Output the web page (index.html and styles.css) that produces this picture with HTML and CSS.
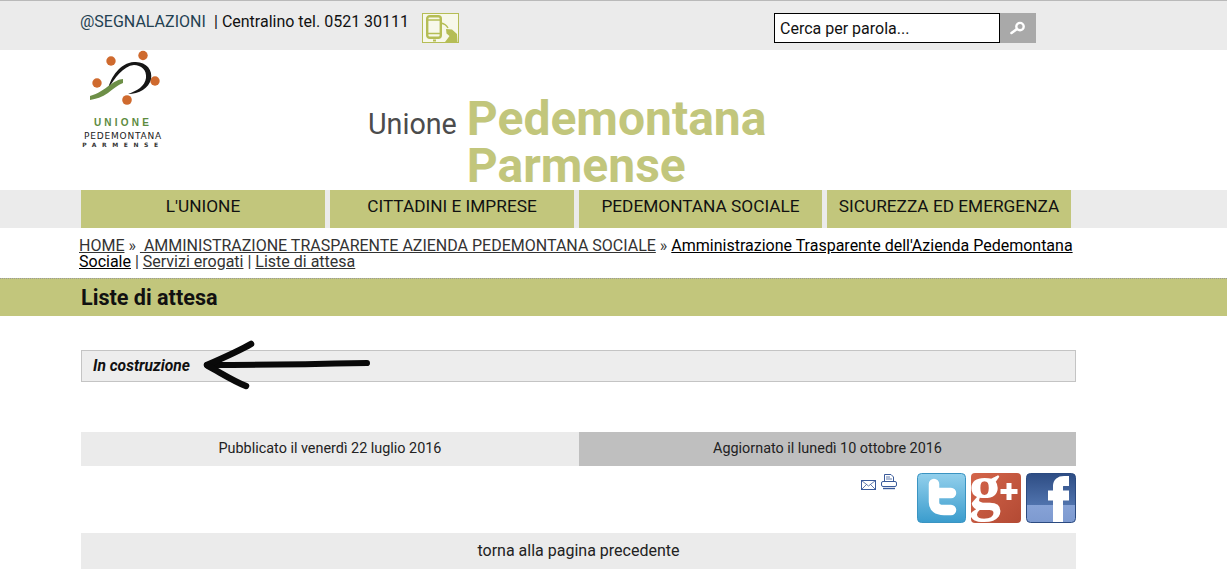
FILE: index.html
```html
<!DOCTYPE html>
<html lang="it">
<head>
<meta charset="utf-8">
<title>Liste di attesa</title>
<link rel="stylesheet" href="styles.css">
</head>
<body>
<div class="topbar">
  <div class="contacts">
    <a class="seg">@SEGNALAZIONI</a>
    <span class="tel">| Centralino tel. 0521 30111</span>
    <span class="phone">
      <svg width="37" height="30" viewBox="0 0 37 30">
        <rect x="0.5" y="0.5" width="36" height="29" fill="#f7f8ea" stroke="#b5bd55"/>
        <rect x="5.2" y="3.2" width="13.6" height="21.6" rx="2.5" fill="none" stroke="#b5bd55" stroke-width="2.4"/>
        <path d="M6 7h12M6 20.500h12" stroke="#b5bd55" stroke-width="1.4"/>
        <path d="M11 26.500v2h3v-2" fill="#b5bd55"/>
        <path d="M19 10 Q24 11 26 15" fill="none" stroke="#b5bd55" stroke-width="1.4"/>
        <path d="M24 16 L30 16.500 L35 21 L35.500 29 L23 29 L27.500 23 L24.500 20.500 Z" fill="#b5bd55"/>
      </svg>
    </span>
  </div>
  <form class="search">
    <div class="search-input">Cerca per parola...</div>
    <div class="search-btn">
      <svg width="18" height="14" viewBox="0 0 18 14">
        <circle cx="11" cy="5.6" r="3.7" fill="none" stroke="#fff" stroke-width="2.4"/>
        <path d="M8 8 L2.500 12" stroke="#fff" stroke-width="2.6" stroke-linecap="round"/>
      </svg>
    </div>
  </form>
</div>

<header class="header">
  <div class="logo">
    <svg class="logo-mark" width="80" height="57" viewBox="0 0 80 57">
      <circle cx="30" cy="11" r="4.7" fill="#cf6a2e"/>
      <circle cx="62" cy="5.500" r="4.7" fill="#cf6a2e"/>
      <circle cx="74" cy="31" r="4.7" fill="#cf6a2e"/>
      <circle cx="16" cy="33" r="4.7" fill="#cf6a2e"/>
      <circle cx="46" cy="50" r="4.8" fill="#cf6a2e"/>
      <path d="M27 39 C30 27 39 13 53 12 C65 11 72 20 70 29 C68 38 58 44 47 44 C56 41 64 36 65 28 C66 20 60 15 53 15 C42 16 34 28 27 39 Z" fill="#161616"/>
      <path d="M9 46 C17 44 23 39 29 35 C33 32 38 29 42 29 L42 33 C37 35 32 39 27 43 C21 47 15 49 9 50 Z" fill="#6d8f47"/>
    </svg>
    <div class="logo-l1">UNIONE</div>
    <div class="logo-l2">PEDEMONTANA</div>
    <div class="logo-l3">PARMENSE</div>
  </div>
  <div class="brand">
    <span class="brand-small">Unione</span>
    <span class="brand-big">Pedemontana Parmense</span>
  </div>
</header>

<nav class="nav">
  <a class="nav-item w1">L'UNIONE</a>
  <a class="nav-item w1">CITTADINI E IMPRESE</a>
  <a class="nav-item w2">PEDEMONTANA SOCIALE</a>
  <a class="nav-item w3">SICUREZZA ED EMERGENZA</a>
</nav>

<div class="crumbs">
  <a class="soft">HOME</a> » <a class="soft">&nbsp;AMMINISTRAZIONE TRASPARENTE AZIENDA PEDEMONTANA SOCIALE</a> » <a class="hard">Amministrazione Trasparente dell'Azienda Pedemontana Sociale</a> | <a class="soft">Servizi erogati</a> | <a class="soft">Liste di attesa</a>
</div>

<h1 class="title">Liste di attesa</h1>

<main class="main">
  <div class="notice">
    <em>In costruzione</em>
    <svg class="arrow" width="176" height="56" viewBox="0 0 176 56">
      <g fill="none" stroke="#0a0a0a" stroke-linecap="round" stroke-linejoin="round">
        <path d="M8 27 C50 27 120 26 168 25" stroke-width="6"/>
        <path d="M52 6 C40 13 24 20 8 27" stroke-width="6.500"/>
        <path d="M9 28 C22 35 36 44 47 48" stroke-width="6.500"/>
      </g>
    </svg>
  </div>

  <div class="dates">
    <div class="date date-a">Pubblicato il venerdì 22 luglio 2016</div>
    <div class="date date-b">Aggiornato il lunedì 10 ottobre 2016</div>
  </div>

  <div class="tools">
    <svg class="mail" width="15" height="10" viewBox="0 0 15 10">
      <rect x="0.5" y="0.5" width="14" height="9" fill="#fff" stroke="#3a5a9a"/>
      <path d="M0.5 0.5 L7.500 6 L14.500 0.5 M0.5 9.500 L5.500 4.500 M14.500 9.500 L9.500 4.500" fill="none" stroke="#3a5a9a" stroke-width="0.8"/>
    </svg>
    <svg class="print" width="16" height="16" viewBox="0 0 16 16">
      <path d="M3.500 7.500 V0.5 H10 L12.500 3 V7.500" fill="#fff" stroke="#3a5a9a"/>
      <path d="M5 3h4M5 5h6" stroke="#3a5a9a" stroke-width="0.8"/>
      <rect x="0.5" y="7.500" width="15" height="5" rx="1.500" fill="#fff" stroke="#3a5a9a"/>
      <path d="M2 14.500h12" stroke="#3a5a9a" stroke-width="1.400"/>
    </svg>
    <div class="social">
      <svg class="soc" width="49" height="50" viewBox="0 0 49 50" role="img" aria-label="Twitter">
        <defs>
          <linearGradient id="twg" x1="0" y1="0" x2="0" y2="1">
            <stop offset="0" stop-color="#93d0ec"/>
            <stop offset="1" stop-color="#3a9ccd"/>
          </linearGradient>
          <linearGradient id="gpg" x1="0" y1="0" x2="1" y2="1">
            <stop offset="0" stop-color="#d4654a"/>
            <stop offset="1" stop-color="#b34a34"/>
          </linearGradient>
          <linearGradient id="fbg" x1="0" y1="0" x2="0" y2="1">
            <stop offset="0" stop-color="#2e4d84"/>
            <stop offset="0.64" stop-color="#5073ad"/>
            <stop offset="0.65" stop-color="#86a2d6"/>
            <stop offset="1" stop-color="#7d9ad0"/>
          </linearGradient>
        </defs>
        <rect x="0.5" y="0.5" width="48" height="49" rx="4" fill="url(#twg)" stroke="#3a94c2"/>
        <path d="M17 11 V29 Q17 37 27 37 H34 M17 20 H34" fill="none" stroke="#fff" stroke-width="10.500" stroke-linecap="round" stroke-linejoin="round"/>
      </svg>
      <svg class="soc" width="50" height="50" viewBox="0 0 50 50" role="img" aria-label="Google Plus">
        <rect width="50" height="50" rx="4" fill="url(#gpg)"/>
        <text class="gl" x="-2" y="35">g</text>
        <path d="M38 10v17M29.500 18.500h17" stroke="#fff" stroke-width="5"/>
      </svg>
      <svg class="soc" width="50" height="50" viewBox="0 0 50 50" role="img" aria-label="Facebook">
        <rect x="0.5" y="0.5" width="49" height="49" rx="4" fill="url(#fbg)" stroke="#2b4a80"/>
        <path d="M32 49 V13 Q32 8 38 8 H43 M22 22.500 H43" fill="none" stroke="#fff" stroke-width="10"/>
      </svg>
    </div>
  </div>

  <div class="back">torna alla pagina precedente</div>
</main>
</body>
</html>
```
FILE: styles.css
```css
* { box-sizing: border-box; }
html, body { margin: 0; padding: 0; }
body {
  background: #fff;
  color: #111;
  font-family: Roboto, "Liberation Sans", sans-serif;
  font-size: 16px;
  overflow: hidden;
}

.topbar {
  height: 50px;
  background: #ebebeb;
  border-top: 1px solid #b9b9b9;
  padding-left: 80px;
  display: flex;
}
.contacts { width: 694px; display: flex; align-items: flex-start; padding-top: 12px; line-height: 17px; }
.seg { color: #234152; width: 125px; white-space: nowrap; }
.tel { margin-left: 9px; color: #111; }
.phone { margin: 0 0 0 13px; height: 30px; }
.phone svg { display: block; }

.search { display: flex; margin-top: 12px; height: 30px; }
.search-input {
  width: 226px;
  height: 30px;
  background: #fff;
  border: 1px solid #000;
  padding-left: 5px;
  line-height: 29px;
  color: #111;
}
.search-btn {
  width: 36px;
  height: 30px;
  background: #a9a9a9;
  display: flex;
  align-items: center;
  justify-content: center;
}

.header { height: 140px; padding-left: 81px; display: flex; }
.logo { width: 287px; }
.logo-mark { display: block; }
.logo-l1, .logo-l2, .logo-l3 { width: 82px; text-align: center; margin-left: 1px; white-space: nowrap; }
.logo-l1 { margin-top: 10px; font-family: "Liberation Sans", sans-serif; font-size: 10px; line-height: 12px; font-weight: 700; letter-spacing: 3.2px; color: #5d8b3e; }
.logo-l2 { font-family: "DejaVu Sans", sans-serif; font-size: 9px; line-height: 10px; margin-top: 2px; color: #222; letter-spacing: 0.8px; }
.logo-l3 { font-family: "DejaVu Sans", sans-serif; font-size: 6px; line-height: 8px; font-weight: 700; letter-spacing: 5.6px; color: #333; margin-top: 0; }

.brand { display: flex; align-items: flex-start; padding-top: 45px; }
.brand-small { font-size: 28.7px; line-height: 58px; color: #4c4c4c; margin-right: 10px; }
.brand-big {
  width: 320px;
  font-size: 48px;
  line-height: 47px;
  font-weight: 700;
  color: #c2c67c;
}

.nav { height: 38px; background: #ebebeb; padding-left: 81px; display: flex; gap: 5px; }
.nav-item {
  background: #c2c67c;
  color: #111;
  font-size: 17.25px;
  line-height: 33px;
  text-align: center;
}
.w1 { width: 244px; }
.w2 { width: 243px; }
.w3 { width: 244px; }

.crumbs {
  height: 50px;
  width: 1000px;
  margin-left: 79px;
  padding-top: 10px;
  font-size: 16px;
  line-height: 16px;
  color: #333;
}
.crumbs a { text-decoration: underline; }
.soft { color: #333; }
.hard { color: #000; }

.title {
  margin: 0;
  height: 38px;
  border-top: 1px dotted #999;
  background: #c2c67c;
  padding-left: 81px;
  font-size: 21.6px;
  line-height: 37px;
  font-weight: 700;
  color: #111;
}

.main { width: 995px; margin-left: 81px; padding-top: 34px; }
.notice {
  position: relative;
  height: 32px;
  background: #ededed;
  border: 1px solid #c4c4c4;
  padding-left: 11px;
  font-size: 15.6px;
  line-height: 30px;
  font-weight: 700;
}
.arrow { position: absolute; left: 117px; top: -13px; filter: blur(0.7px); }

.dates { display: flex; margin-top: 50px; }
.date { height: 34px; line-height: 33px; text-align: center; font-size: 14.4px; color: #222; }
.date-a { width: 498px; background: #ebebeb; }
.date-b { width: 497px; background: #bfbfbf; }

.tools { position: relative; height: 50px; margin-top: 7px; display: flex; justify-content: flex-end; }
.mail { position: absolute; left: 780px; top: 7px; }
.print { position: absolute; left: 800px; top: 1px; }
.social { display: flex; gap: 5px; }
.soc { display: block; }
.gl {
  font-family: "Liberation Serif", serif;
  font-size: 64px;
  font-weight: 700;
  fill: #fff;
}

.back {
  height: 36px;
  margin-top: 10px;
  background: #ebebeb;
  text-align: center;
  line-height: 35px;
  font-size: 16px;
  color: #222;
}
```
